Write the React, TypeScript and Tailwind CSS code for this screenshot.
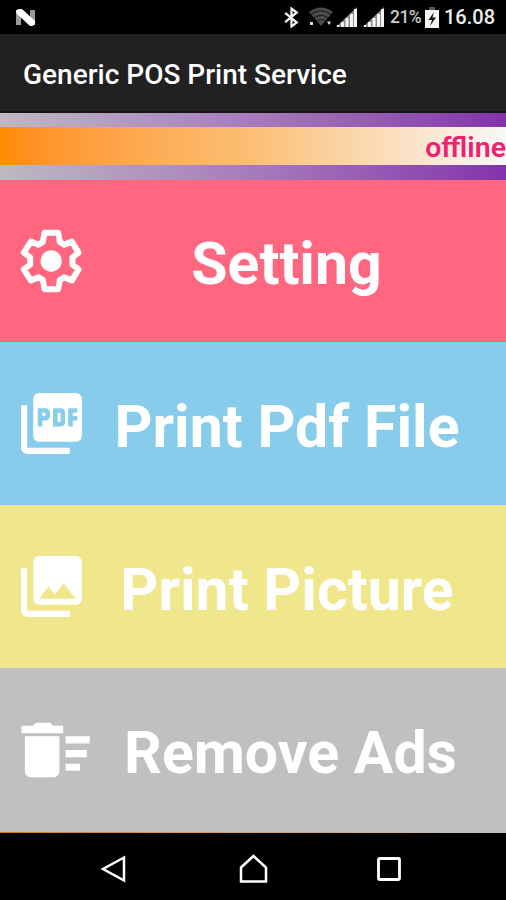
import type { ReactNode } from "react";
import { MdPhotoLibrary, MdPictureAsPdf } from "react-icons/md";

interface MenuRowProps {
  label: string;
  className: string;
  icon: ReactNode;
}

function GearIcon() {
  return (
    <svg viewBox="44.5 41 222 222" className="size-[74px]">
      <path
        d="M133 67H174L179 95L192 103L215 94L235 127L217 141V163L235 177L215 210L192 201L179 209L174 237H133L128 209L115 201L92 210L71 177L90 163V141L71 127L92 94L115 103L128 95z"
        fill="none"
        stroke="currentColor"
        strokeWidth="18"
        strokeLinejoin="round"
      />
      <circle cx="153" cy="152" r="32" fill="currentColor" />
    </svg>
  );
}

function SweepIcon() {
  return (
    <svg viewBox="0 0 24 24" className="size-[82px]" fill="currentColor">
      <path d="M14.1 4.9h-3c-.3-.6-.7-.9-1.300-.9H6.700c-.7 0-1.100.3-1.400.9H1.900v2.200h12.200zM2.900 8h10.100v10.200c0 1-.9 1.800-1.900 1.800H4.800c-1 0-1.900-.8-1.900-1.800zM14.800 8H22l-.2 2.100h-7zM14.800 12h6.200v2.100h-6.200zM14.800 16h4.200v2.100h-4.200z" />
    </svg>
  );
}

function SignalIcon() {
  return (
    <svg viewBox="0 0 21 20" className="h-5 w-[21px]">
      <path d="M0 20L21 0v20z" fill="#8c8c8c" />
      <path
        d="M1 18h2v2H1zM5 15h3v5H5zM9.500 11h3v9h-3zM14 7h3v13h-3zM18 2h3v18h-3z"
        fill="#f4f4f4"
      />
    </svg>
  );
}

function StatusBar() {
  return (
    <div className="flex h-[34px] shrink-0 items-center bg-black pr-[11px] pl-[15px] text-[#eee]">
      <svg viewBox="0 0 21 17" className="h-[17px] w-[21px]">
        <path d="M1 1h5v15H1zM15 1h5v15h-5z" fill="#9a9a9a" />
        <path d="M1 3Q1 0 5 0h2l13 12q1 4-3 5h-2L2 5z" fill="#fff" />
      </svg>
      <div className="ml-auto flex items-center">
        <svg
          viewBox="0 0 14 20"
          className="h-[21px] w-[15px]"
          fill="none"
          stroke="#eee"
          strokeWidth="2.2"
        >
          <path d="M1 5.500l11 9.300L7 18.500V1.500l5 3.700L1 14.500" />
        </svg>
        <svg viewBox="0 0 24 20" className="ml-[10px] h-5 w-6">
          <path d="M0 5Q12-4 24 5L12 19z" fill="#4b4b4b" />
          <path
            d="M2 7.500Q12 0 22 7.500M5 11q7-5.500 14 0M8 14q4-3 8 0"
            fill="none"
            stroke="#1e1e1e"
            strokeWidth="1.200"
          />
          <path d="M1 15h3v3H1zM18 14.500h4L20 18z" fill="#ddd" />
        </svg>
        <div className="ml-[3px] flex gap-[6px]">
          <SignalIcon />
          <SignalIcon />
        </div>
        <span className="ml-1.5 w-[31px] text-[17.5px] leading-5 font-medium tracking-[-0.5px] text-[#c8c8c8]">
          21%
        </span>
        <svg viewBox="0 0 14 21" className="ml-1 h-[21px] w-3.5">
          <path d="M4 0h6v3H4z" fill="#555" />
          <path d="M0 3h14v18H0z" fill="#f4f4f4" />
          <path d="M9 5L3.500 13H7l-2 6 6-8.500H7.500z" fill="#111" />
        </svg>
        <span className="ml-[5px] text-[20px] leading-5 font-medium">
          16.08
        </span>
      </div>
    </div>
  );
}

function MenuRow({ label, className, icon }: MenuRowProps) {
  return (
    <button
      className={`flex w-full shrink-0 items-center pl-[15px] text-white ${className}`}
    >
      <span className="flex w-[82px] shrink-0">{icon}</span>
      <span className="flex-1 pt-1.5 text-center text-[59px] leading-[68px] font-bold whitespace-nowrap">
        {label}
      </span>
    </button>
  );
}

function NavBar() {
  return (
    <div className="flex h-[67px] shrink-0 items-center bg-black pt-1 pl-[100px] text-white">
      <svg
        viewBox="0 0 26 30"
        className="h-[30px] w-[26px]"
        fill="none"
        stroke="currentColor"
        strokeWidth="2.500"
      >
        <path d="M24 3.500v23L3 15z" />
      </svg>
      <svg
        viewBox="0 0 30 30"
        className="ml-[113px] h-[30px] w-[30px]"
        fill="none"
        stroke="currentColor"
        strokeWidth="2.500"
      >
        <path d="M2 13.500L14.500 2 27 13.500V27.500H2z" />
      </svg>
      <svg
        viewBox="0 0 26 26"
        className="ml-[107px] h-[26px] w-[26px]"
        fill="none"
        stroke="currentColor"
        strokeWidth="2.800"
      >
        <rect x="2.500" y="2.500" width="21" height="21" rx="1" />
      </svg>
    </div>
  );
}

export default function App() {
  return (
    <div className="flex h-[900px] w-[506px] flex-col overflow-hidden bg-black font-['Roboto',sans-serif]">
      <StatusBar />
      <header className="flex h-[79px] shrink-0 items-center border-b-2 border-[#151515] bg-[#212121] pl-[23px]">
        <h1 className="pt-1 text-[28px] leading-8 font-medium whitespace-nowrap text-white">
          Generic POS Print Service
        </h1>
      </header>
      <div className="h-[67px] shrink-0 bg-linear-to-r from-[#bdb9c0] via-[#a67bbb] to-[#8332ab] pt-3.5">
        <div className="flex h-[38px] items-center justify-end bg-linear-to-r from-[#ff8c00] via-[#fbbf74] to-[#f8f8f6]">
          <span className="pt-1 text-[28.5px] leading-8 font-semibold text-[#f02070]">
            offline
          </span>
        </div>
      </div>
      <MenuRow
        label="Setting"
        className="h-[162px] bg-[#ff6680] pr-[30px]"
        icon={<GearIcon />}
      />
      <MenuRow
        label="Print Pdf File"
        className="h-[163px] bg-[#87cdeb] pr-[29px]"
        icon={<MdPictureAsPdf className="size-[73px]" />}
      />
      <MenuRow
        label="Print Picture"
        className="h-[163px] bg-[#f0e68c] pr-[29px]"
        icon={<MdPhotoLibrary className="size-[73px]" />}
      />
      <MenuRow
        label="Remove Ads"
        className="h-[164px] bg-[#c0c0c0] pr-[22px]"
        icon={<SweepIcon />}
      />
      <div className="h-px shrink-0 bg-linear-to-r from-[#d87a10] to-[#c0c0c0]" />
      <NavBar />
    </div>
  );
}
